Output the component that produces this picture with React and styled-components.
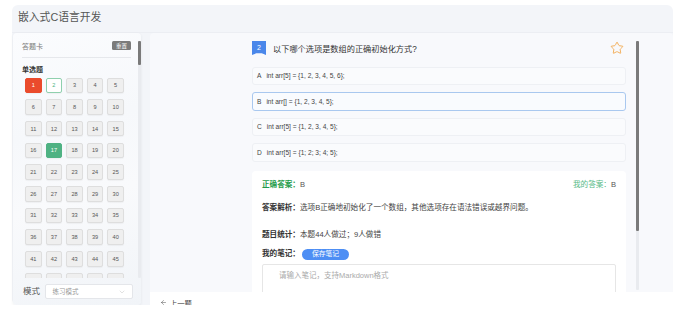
import React from 'react';
import styled, { createGlobalStyle } from 'styled-components';
import { Star, ChevronDown, ArrowLeft } from 'lucide-react';

const GlobalStyle = createGlobalStyle`
  body {
    margin: 0;
    background: #fff;
    font-family: "Liberation Sans", "Noto Sans CJK SC", sans-serif;
  }
  * { box-sizing: border-box; }
`;

const questionCount = 50;

const statusOf = (n) => {
    if (n === 1) return 'wrong';
    if (n === 2) return 'current';
    if (n === 17) return 'right';
    return 'idle';
};

const options = [
    { key: 'A', text: 'int arr[5] = {1, 2, 3, 4, 5, 6};' },
    { key: 'B', text: 'int arr[] = {1, 2, 3, 4, 5};', picked: true },
    { key: 'C', text: 'int arr[5] = {1, 2, 3, 4, 5};' },
    { key: 'D', text: 'int arr[5] = {1; 2; 3; 4; 5};' },
];

const App = () => {
    return (
        <Page>
            <GlobalStyle />
            <Header>嵌入式C语言开发</Header>
            <Body>
                <Sidebar>
                    <SideTop>
                        <SideScroll>
                            <CardHead>
                                <span>答题卡</span>
                                <ResetBadge>重置</ResetBadge>
                            </CardHead>
                            <Divider />
                            <SectionTitle>单选题</SectionTitle>
                            <NumGrid>
                                {Array.from({ length: questionCount }, (_, i) => (
                                    <NumButton key={i} $state={statusOf(i + 1)}>
                                        {i + 1}
                                    </NumButton>
                                ))}
                            </NumGrid>
                        </SideScroll>
                        <Track $top={8} $bottom={0}>
                            <Thumb $len={24} />
                        </Track>
                    </SideTop>
                    <SideFooter>
                        <span>模式</span>
                        <SelectBox>
                            <span>练习模式</span>
                            <ChevronDown size={8} color="#c4c4c4" strokeWidth={1.5} />
                        </SelectBox>
                    </SideFooter>
                </Sidebar>

                <Main>
                    <MainTop>
                        <MainScroll>
                            <Inner>
                                <QuestionHead>
                                    <NoBadge>2</NoBadge>
                                    <QuestionText>以下哪个选项是数组的正确初始化方式?</QuestionText>
                                    <Star size={14} color="#f2a13c" strokeWidth={1.4} />
                                </QuestionHead>

                                <OptionList>
                                    {options.map((o) => (
                                        <Option key={o.key} $picked={o.picked}>
                                            <OptKey>{o.key}</OptKey>
                                            {o.text}
                                        </Option>
                                    ))}
                                </OptionList>

                                <AnswerCard>
                                    <AnswerRow>
                                        <span>
                                            <RightLabel>正确答案：</RightLabel>
                                            <Plain>B</Plain>
                                        </span>
                                        <span>
                                            <MineLabel>我的答案：</MineLabel>
                                            <Plain>B</Plain>
                                        </span>
                                    </AnswerRow>
                                    <InfoRow $gap={13.3}>
                                        <BoldLabel>答案解析：</BoldLabel>
                                        选项B正确地初始化了一个数组，其他选项存在语法错误或越界问题。
                                    </InfoRow>
                                    <InfoRow $gap={16.7}>
                                        <BoldLabel>题目统计：</BoldLabel>
                                        本题44人做过；9人做错
                                    </InfoRow>
                                    <NoteRow>
                                        <BoldLabel>我的笔记：</BoldLabel>
                                        <SaveButton>保存笔记</SaveButton>
                                    </NoteRow>
                                    <NoteInput placeholder="请输入笔记，支持Markdown格式" />
                                </AnswerCard>
                            </Inner>
                        </MainScroll>
                        <Track $top={8} $bottom={2}>
                            <Thumb $len={190} />
                        </Track>
                    </MainTop>
                    <BottomBar>
                        <ArrowLeft size={7} strokeWidth={1.6} />
                        <span>上一题</span>
                    </BottomBar>
                </Main>
            </Body>
        </Page>
    );
};

const Page = styled.div`
    width: 661px;
    height: 300px;
    margin: 5px 0 0 12px;
    background: #f3f5f9;
    border-radius: 6px;
    display: flex;
    flex-direction: column;
`;

const Header = styled.div`
    height: 28px;
    flex: 0 0 28px;
    padding: 0 0 5px 6px;
    display: flex;
    align-items: center;
    font-size: 10.8px;
    color: #555;
    border-bottom: 1px solid #eceef3;
`;

const Body = styled.div`
    display: flex;
    align-items: flex-start;
    gap: 9px;
    height: 272px;
`;

const Sidebar = styled.div`
    width: 128px;
    height: 272px;
    margin-left: 1px;
    border-radius: 4px;
    background: linear-gradient(165deg, #fbfcfe 0%, #f6f8fb 35%, #f9fafc 60%, #f1f4f8 100%);
    box-shadow: 0 1px 3px rgba(40, 50, 70, 0.08);
    display: flex;
    flex-direction: column;
`;

const SideTop = styled.div`
    flex: 1;
    min-height: 0;
    display: flex;
`;

const SideScroll = styled.div`
    flex: 1;
    overflow: hidden;
    padding: 8px 7px 0 9px;
`;

const Track = styled.div`
    width: 3px;
    margin: ${(p) => p.$top}px 0 ${(p) => p.$bottom}px;
    background: #e9ebef;
    border-radius: 1px;
`;

const Thumb = styled.div`
    height: ${(p) => p.$len}px;
    background: #7a7a7a;
    border-radius: 1px;
`;

const CardHead = styled.div`
    height: 9px;
    display: flex;
    justify-content: space-between;
    align-items: center;
    font-size: 7px;
    color: #7a7a7a;
`;

const ResetBadge = styled.span`
    width: 19px;
    height: 8.5px;
    border-radius: 1.5px;
    background: #7b7b7b;
    color: #fff;
    font-size: 5.5px;
    display: flex;
    align-items: center;
    justify-content: center;
`;

const Divider = styled.div`
    height: 1px;
    margin-top: 6.5px;
    background: #e6e8ec;
`;

const SectionTitle = styled.div`
    margin-top: 7px;
    line-height: 9px;
    font-size: 7px;
    font-weight: bold;
    color: #333;
`;

const NumGrid = styled.div`
    margin-top: 4px;
    padding-left: 3px;
    display: grid;
    grid-template-columns: repeat(5, 16.7px);
    column-gap: 3.9px;
    row-gap: 6.1px;
`;

const numColors = {
    idle: { bg: '#efefef', border: '#dedede', color: '#555' },
    current: { bg: '#ffffff', border: '#8fd0ae', color: '#4db37f' },
    wrong: { bg: '#ea4b2c', border: '#ea4b2c', color: '#fff' },
    right: { bg: '#4fb283', border: '#4fb283', color: '#fff' },
};

const NumButton = styled.div`
    height: 15.6px;
    border-radius: 2px;
    border: 1px solid ${(p) => numColors[p.$state].border};
    background: ${(p) => numColors[p.$state].bg};
    color: ${(p) => numColors[p.$state].color};
    box-shadow: 0 1px 1px rgba(0, 0, 0, 0.04);
    font-size: 5.6px;
    display: flex;
    align-items: center;
    justify-content: center;
`;

const SideFooter = styled.div`
    flex: 0 0 27px;
    padding: 6px 0 0 10px;
    display: flex;
    align-items: flex-start;
    gap: 4.5px;
    font-size: 8.5px;
    color: #555;
    line-height: 15px;
`;

const SelectBox = styled.div`
    width: 88px;
    height: 15px;
    border: 1px solid #e4e6ea;
    border-radius: 2px;
    background: #fff;
    padding: 0 6px 0 7px;
    display: flex;
    align-items: center;
    justify-content: space-between;
    font-size: 6.5px;
    color: #9a9a9a;
`;

const Main = styled.div`
    flex: 1;
    height: 280px;
    background: #f8f9fc;
    border-radius: 4px 4px 0 0;
    display: flex;
    flex-direction: column;
`;

const MainTop = styled.div`
    flex: 1;
    min-height: 0;
    display: flex;
    padding-right: 34px;
`;

const MainScroll = styled.div`
    flex: 1;
    overflow: hidden;
`;

const Inner = styled.div`
    width: 374px;
    margin: 0 10px 0 auto;
    padding-top: 8px;
`;

const QuestionHead = styled.div`
    height: 14px;
    display: flex;
    align-items: center;
    padding-right: 2px;
`;

const NoBadge = styled.div`
    width: 14px;
    height: 14px;
    background: #4a87ea;
    color: #fff;
    font-size: 7px;
    padding-bottom: 2px;
    display: flex;
    align-items: center;
    justify-content: center;
    clip-path: polygon(0 0, 100% 0, 100% 100%, 70% 88%, 30% 88%, 0 100%);
`;

const QuestionText = styled.div`
    flex: 1;
    margin-left: 7px;
    font-size: 8.2px;
    color: #333;
`;

const OptionList = styled.div`
    margin-top: 11.5px;
    display: flex;
    flex-direction: column;
    gap: 7px;
`;

const Option = styled.div`
    height: 18.5px;
    padding-left: 4px;
    border-radius: 3px;
    border: 1px solid ${(p) => (p.$picked ? '#a9c8ef' : '#eef0f4')};
    background: ${(p) => (p.$picked ? '#f9fbfe' : '#fafbfd')};
    display: flex;
    align-items: center;
    font-size: 6.6px;
    color: #444;
`;

const OptKey = styled.span`
    margin-right: 5px;
`;

const AnswerCard = styled.div`
    margin-top: 9px;
    background: #fff;
    border-radius: 4px;
    padding: 9.7px 10px 12px 10px;
    font-size: 7.6px;
    line-height: 10px;
    color: #444;
`;

const AnswerRow = styled.div`
    display: flex;
    justify-content: space-between;
`;

const RightLabel = styled.span`
    color: #1f9c4b;
    font-weight: bold;
`;

const MineLabel = styled.span`
    color: #55b985;
`;

const Plain = styled.span`
    color: #555;
`;

const InfoRow = styled.div`
    margin-top: ${(p) => p.$gap}px;
`;

const BoldLabel = styled.span`
    color: #333;
    font-weight: bold;
`;

const NoteRow = styled.div`
    margin-top: 8.6px;
    height: 11px;
    display: flex;
    align-items: center;
    gap: 2px;
`;

const SaveButton = styled.div`
    width: 47px;
    height: 11px;
    border-radius: 6px;
    background: #4d8ef4;
    color: #fff;
    font-size: 6.8px;
    display: flex;
    align-items: center;
    justify-content: center;
`;

const NoteInput = styled.textarea`
    display: block;
    width: 100%;
    height: 44px;
    margin-top: 4px;
    padding: 6px 16px;
    border: 1px solid #e6e6e6;
    border-radius: 2px;
    resize: none;
    outline: none;
    font-family: "Liberation Sans", "Noto Sans CJK SC", sans-serif;
    font-size: 7.5px;
    line-height: 10px;
    color: #444;

    &::placeholder { color: #aaa; }
`;

const BottomBar = styled.div`
    flex: 0 0 21px;
    background: #fff;
    padding-left: 10px;
    display: flex;
    align-items: center;
    gap: 3px;
    font-size: 7.3px;
    color: #444;
`;

export default App;
